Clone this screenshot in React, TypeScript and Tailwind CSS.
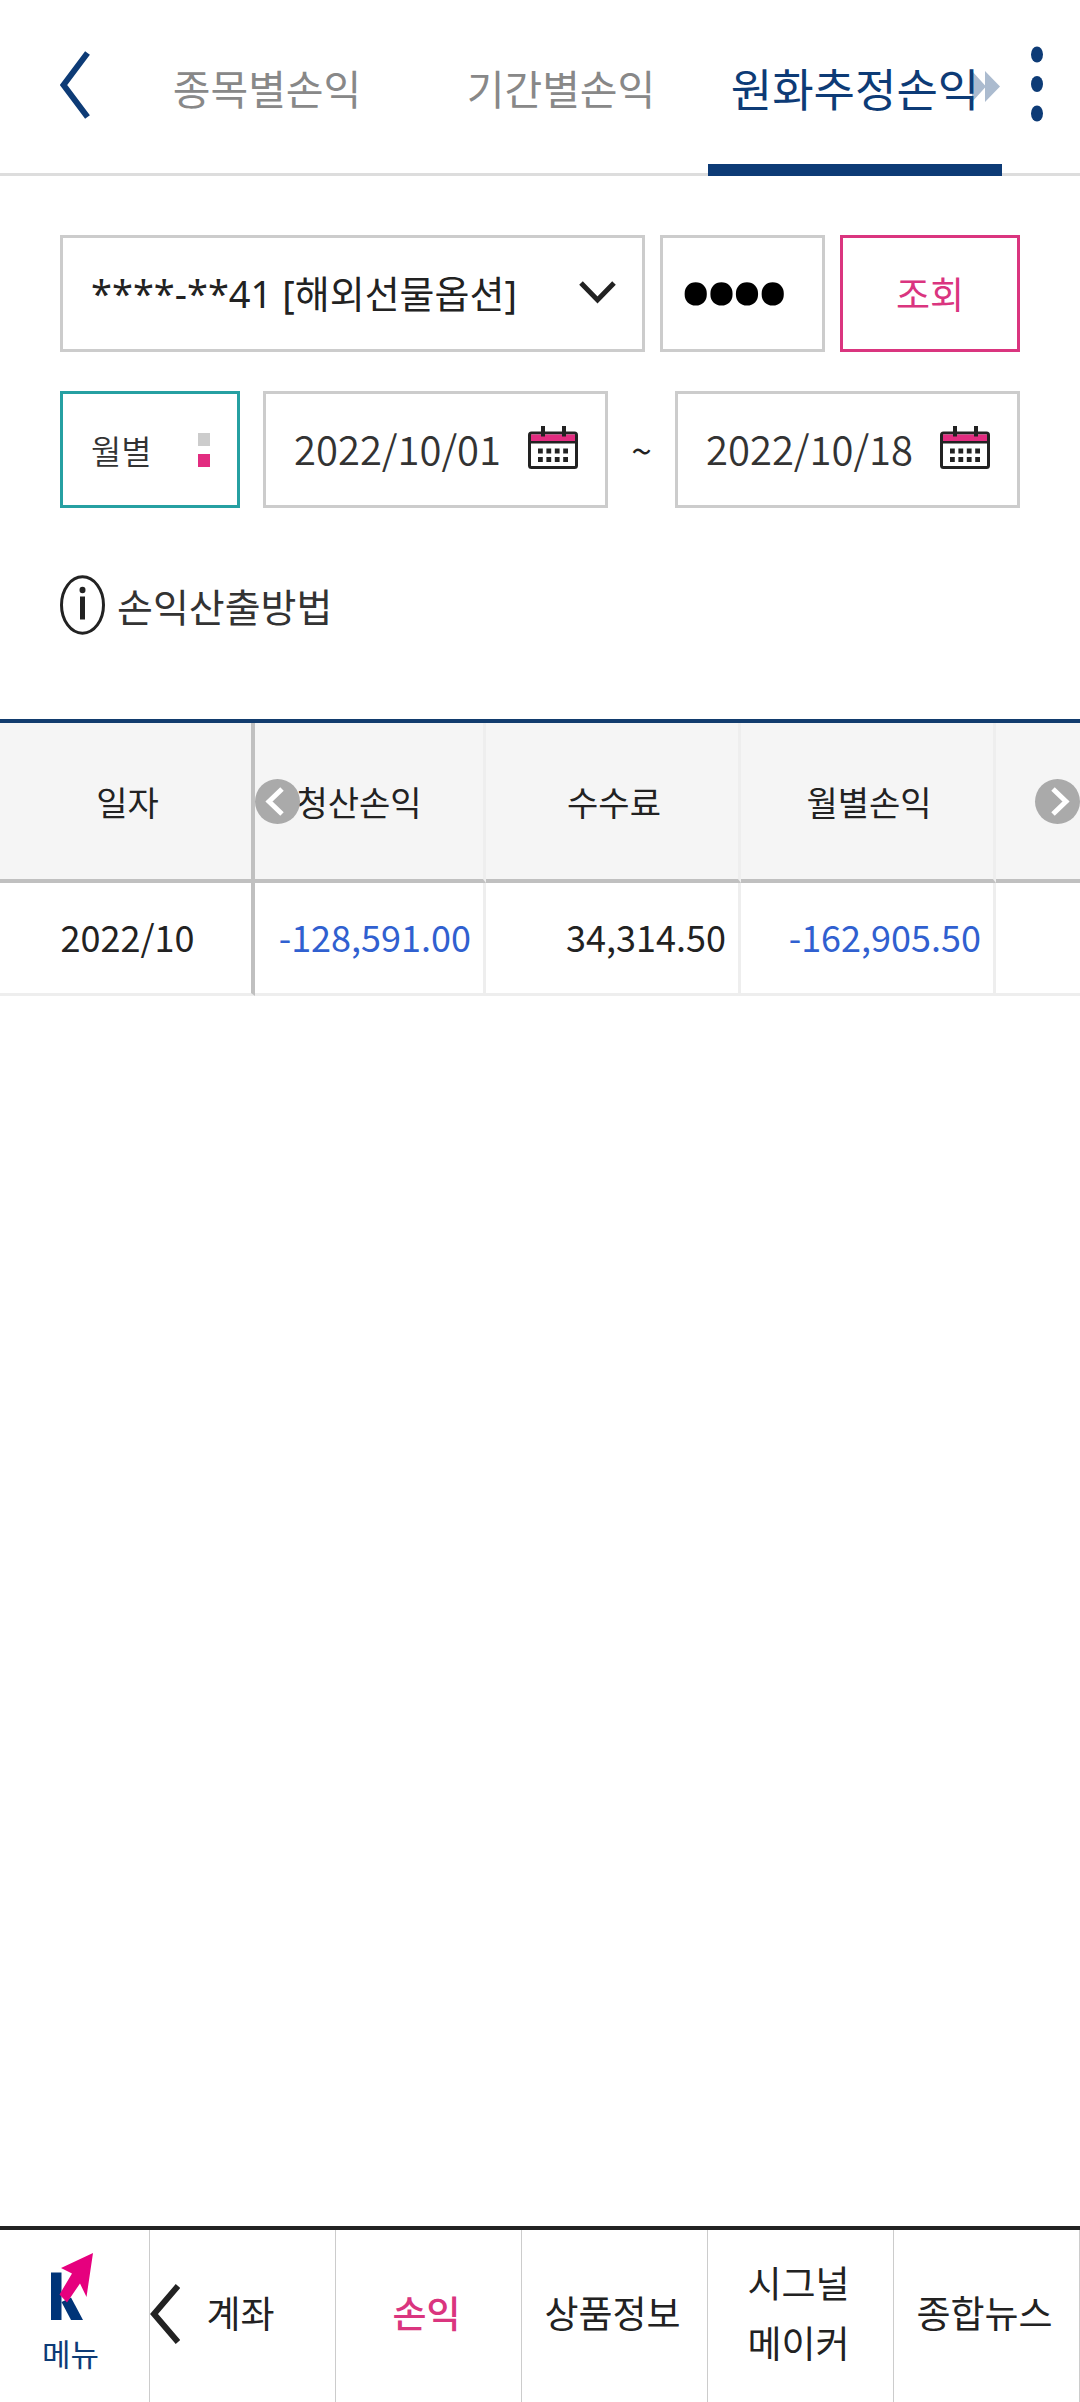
import React, { useState } from 'react';

const CalendarIcon: React.FC = () => (
  <svg className="h-[43px] w-[50px] shrink-0" viewBox="0 0 50 43" fill="none" aria-hidden="true">
    <rect x="1.5" y="7" width="47" height="34.5" rx="2" fill="#fff" stroke="#222" strokeWidth="3" />
    <rect x="3" y="8.5" width="44" height="6.5" fill="#e22c80" />
    <path d="M2 16.2H48" stroke="#222" strokeWidth="2.6" />
    <path d="M15 0V10.5M36 0V10.5" stroke="#222" strokeWidth="4" />
    <path d="M10 25H41M10 33.5H41" stroke="#222" strokeWidth="5" strokeDasharray="4.8 3.6" />
  </svg>
);

const MenuLogo: React.FC = () => (
  <svg className="h-[68px] w-[44px]" viewBox="0 0 44 68" aria-hidden="true">
    <rect x="2" y="19.5" width="10.5" height="47.5" fill="#003478" />
    <path d="M12.5 49L22 44.5L34 67H22Z" fill="#003478" />
    <path d="M44 0L12 15L23 20.5L10.5 41.5L18 49.5L31 30.5L37.5 44Z" fill="#e6007e" />
  </svg>
);

interface ScrollButtonProps {
  label: string;
  className: string;
  points: string;
}

const ScrollButton: React.FC<ScrollButtonProps> = ({ label, className, points }) => (
  <button
    type="button"
    aria-label={label}
    className={`absolute top-14 h-[45px] w-[45px] rounded-full bg-[#aaaaaa] ${className}`}
  >
    <svg viewBox="0 0 45 45" fill="none" aria-hidden="true">
      <polyline points={points} stroke="#fff" strokeWidth="5" />
    </svg>
  </button>
);

interface DateFieldProps {
  label: string;
  value: string;
  onChange: (value: string) => void;
}

const DateField: React.FC<DateFieldProps> = ({ label, value, onChange }) => (
  <div className="flex h-full min-w-0 flex-1 items-center border-3 border-[#cccccc] pr-[27px] pb-1 pl-7">
    <input
      type="text"
      aria-label={label}
      value={value}
      onChange={(e) => onChange(e.target.value)}
      className="min-w-0 flex-1 text-[40px] font-[350] text-[#333333] outline-none"
    />
    <button type="button" aria-label={`${label} 선택`}>
      <CalendarIcon />
    </button>
  </div>
);

const tabs = ['종목별손익', '기간별손익', '원화추정손익'];

const rows = [
  { date: '2022/10', settled: '-128,591.00', fee: '34,314.50', monthly: '-162,905.50' },
];

const bottomMenus = ['계좌', '손익', '상품정보', '시그널 메이커', '종합뉴스'];

const App: React.FC = () => {
  const [activeTab, setActiveTab] = useState('원화추정손익');
  const [activeMenu, setActiveMenu] = useState('손익');
  const [password, setPassword] = useState('0000');
  const [monthly, setMonthly] = useState(true);
  const [from, setFrom] = useState('2022/10/01');
  const [to, setTo] = useState('2022/10/18');

  const amountClass = (value: string) =>
    `border-r-3 border-b-3 border-[#eeeeee] pr-3 pb-1 text-right ${value.startsWith('-') ? 'text-[#3060d0]' : 'text-[#222222]'}`;

  return (
    <div className="flex min-h-screen flex-col bg-white font-['Noto_Sans_CJK_KR',sans-serif] text-[#222222]">
      <header className="flex h-[176px] border-b-3 border-[#dddddd]">
        <button type="button" aria-label="뒤로" className="w-[120px] shrink-0 pl-[60px]">
          <svg className="mb-1 h-[68px] w-[30px]" viewBox="0 0 30 68" fill="none" aria-hidden="true">
            <path d="M27.5 2L3.500 34L27.500 66" stroke="#0d3b76" strokeWidth="6" />
          </svg>
        </button>
        <nav className="relative flex h-[176px] flex-1">
          {tabs.map((tab) => (
            <button
              key={tab}
              type="button"
              onClick={() => setActiveTab(tab)}
              className={
                tab === activeTab
                  ? 'flex-1 border-b-12 border-[#0d3b76] pt-3 text-[45px] whitespace-nowrap text-[#0d3b76]'
                  : 'flex-1 border-b-12 border-transparent pt-3 text-[41px] whitespace-nowrap text-[#888888]'
              }
            >
              {tab}
            </button>
          ))}
          <svg className="absolute top-[71px] right-[2px] h-[31px] w-[28px]" viewBox="0 0 28 31" aria-hidden="true">
            <path d="M0 0L14 15.500L0 31ZM13 0L28 15.500L13 31Z" fill="#0d3b76" fillOpacity="0.35" />
          </svg>
        </nav>
        <button type="button" aria-label="더보기" className="flex w-[78px] shrink-0 justify-center pt-[46px] pr-[8px]">
          <svg className="h-[76px] w-[12px]" viewBox="0 0 12 76" fill="#0d3b76" aria-hidden="true">
            <ellipse cx="6" cy="8.500" rx="6" ry="8" />
            <ellipse cx="6" cy="38" rx="6" ry="8" />
            <ellipse cx="6" cy="67.500" rx="6" ry="8" />
          </svg>
        </button>
      </header>

      <main className="flex-1">
        <form className="px-[60px] pt-[59px]" onSubmit={(e) => e.preventDefault()}>
          <div className="flex h-[117px] gap-[15px]">
            <div className="relative min-w-0 flex-1">
              <select
                aria-label="계좌 선택"
                className="h-full w-full appearance-none border-3 border-[#cccccc] bg-white pr-[90px] pl-7 font-['Noto_Sans','Noto_Sans_CJK_KR',sans-serif] text-[38px] text-[#222222] outline-none"
              >
                <option>****-**41 [해외선물옵션]</option>
              </select>
              <svg
                className="pointer-events-none absolute top-[46px] right-[29px] h-[23px] w-[37px]"
                viewBox="0 0 37 23"
                fill="none"
                aria-hidden="true"
              >
                <path d="M2 2L18.500 19L35 2" stroke="#222" strokeWidth="5" />
              </svg>
            </div>
            <input
              type="password"
              aria-label="비밀번호"
              value={password}
              onChange={(e) => setPassword(e.target.value)}
              className="w-[165px] border-3 border-[#cccccc] pt-1 pl-5 font-['Roboto',sans-serif] text-[76px] text-black outline-none [-webkit-text-stroke:7px_#000]"
            />
            <button type="submit" className="w-[180px] border-3 border-[#da357f] text-[37px] text-[#da357f]">
              조회
            </button>
          </div>

          <div className="mt-[39px] flex h-[117px] items-center">
            <button
              type="button"
              onClick={() => setMonthly(!monthly)}
              className="mr-[23px] flex h-full w-[180px] items-center justify-between border-3 border-[#26a0a2] pr-[27px] pl-[28px] text-[33px] leading-[48px] font-[350] text-[#333333]"
            >
              {monthly ? '월별' : '일별'}
              <span className="flex flex-col gap-2">
                <span className={monthly ? 'h-[13px] w-3 bg-[#cccccc]' : 'h-[13px] w-3 bg-[#e22c80]'} />
                <span className={monthly ? 'h-[13px] w-3 bg-[#e22c80]' : 'h-[13px] w-3 bg-[#cccccc]'} />
              </span>
            </button>
            <DateField label="시작일" value={from} onChange={setFrom} />
            <span className="w-[67px] text-center text-[37px]">~</span>
            <DateField label="종료일" value={to} onChange={setTo} />
          </div>

          <button type="button" className="mt-[67px] flex h-[60px] items-center gap-3 text-[39px] text-[#333333]">
            <svg className="h-[60px] w-[45px]" viewBox="0 0 45 60" fill="none" aria-hidden="true">
              <ellipse cx="22.500" cy="30" rx="21" ry="28.200" stroke="#222" strokeWidth="3" />
              <ellipse cx="22.500" cy="15" rx="3" ry="3.200" fill="#222" />
              <path d="M22.500 21.500V44.500" stroke="#222" strokeWidth="5" />
            </svg>
            손익산출방법
          </button>
        </form>

        <div className="relative mt-[84px] border-t-4 border-[#123c6e]">
          <table className="w-full table-fixed border-separate border-spacing-0">
            <colgroup>
              <col className="w-[255px]" />
              <col className="w-[231px]" />
              <col className="w-[255px]" />
              <col className="w-[255px]" />
              <col />
            </colgroup>
            <thead>
              <tr className="h-[160px] bg-[#f5f5f5] text-[34px]">
                <th scope="col" className="border-r-4 border-b-4 border-[#c0c0c0] pl-1 font-normal">일자</th>
                <th scope="col" className="border-r-3 border-b-4 border-r-[#eeeeee] border-b-[#c0c0c0] pr-5 font-normal">청산손익</th>
                <th scope="col" className="border-r-3 border-b-4 border-r-[#eeeeee] border-b-[#c0c0c0] pl-1 font-normal">수수료</th>
                <th scope="col" className="border-r-3 border-b-4 border-r-[#eeeeee] border-b-[#c0c0c0] pl-1 font-normal">월별손익</th>
                <td className="border-b-4 border-[#c0c0c0]" />
              </tr>
            </thead>
            <tbody>
              {rows.map((row) => (
                <tr key={row.date} className="h-[113px] text-[36px]">
                  <td className="border-r-4 border-b-3 border-r-[#c0c0c0] border-b-[#eeeeee] pb-1 pl-1 text-center">{row.date}</td>
                  <td className={amountClass(row.settled)}>{row.settled}</td>
                  <td className={amountClass(row.fee)}>{row.fee}</td>
                  <td className={amountClass(row.monthly)}>{row.monthly}</td>
                  <td className="border-b-3 border-[#eeeeee]" />
                </tr>
              ))}
            </tbody>
          </table>
          <ScrollButton label="이전 항목" className="left-[255px]" points="27,10 14,22.500 27,35" />
          <ScrollButton label="다음 항목" className="right-0" points="18,10 31,22.500 18,35" />
        </div>
      </main>

      <nav className="flex h-[176px] border-t-4 border-[#222222]">
        <button
          type="button"
          className="flex w-[150px] shrink-0 flex-col items-center border-r border-[#cccccc] pt-[23px] pr-2 text-[31px] leading-[48px] text-[#0d3b76]"
        >
          <MenuLogo />
          <span className="mt-2">메뉴</span>
        </button>
        <div className="relative flex flex-1">
          {bottomMenus.map((menu) => (
            <button
              key={menu}
              type="button"
              onClick={() => setActiveMenu(menu)}
              className={
                menu === activeMenu
                  ? 'w-0 flex-1 border-r border-[#cccccc] pr-1 pb-2 text-[37px] leading-[60px] font-medium text-[#da357f]'
                  : 'w-0 flex-1 border-r border-[#cccccc] pr-1 pb-2 text-[37px] leading-[60px] whitespace-pre-line text-[#222222]'
              }
            >
              {menu.replace(' ', '\n')}
            </button>
          ))}
          <svg className="absolute top-[54px] left-0 h-[60px] w-[30px]" viewBox="0 0 30 60" fill="none" aria-hidden="true">
            <path d="M28 2L4 30L28 58" stroke="#222" strokeWidth="6" />
          </svg>
        </div>
      </nav>
    </div>
  );
};

export default App;
